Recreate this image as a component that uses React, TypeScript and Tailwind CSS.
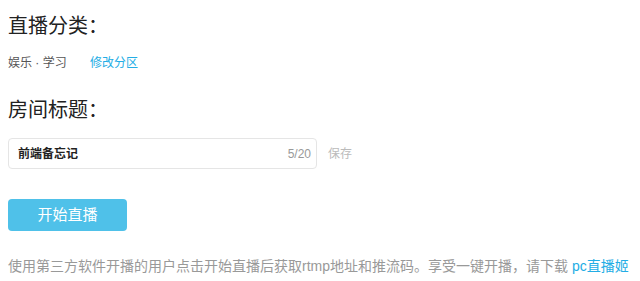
const CJK = "font-['Helvetica_Neue','Liberation_Sans','Noto_Sans_CJK_SC',sans-serif]";

export default function App() {
  return (
    <div className={`h-[281px] w-[640px] overflow-hidden bg-white px-2 pt-[14px] ${CJK}`}>
      <section>
        <h2 className="text-[20px] leading-[24px] text-[#222]">直播分类：</h2>
        <div className="mt-[17px] flex items-center text-[12px] leading-[16px]">
          <span className="w-[82px] text-[#555]">娱乐 · 学习</span>
          <a className="cursor-pointer text-[#23ade5]">修改分区</a>
        </div>
      </section>

      <section className="mt-[27px]">
        <h2 className="text-[20px] leading-[24px] text-[#222]">房间标题：</h2>
        <div className="mt-[16px] flex items-center">
          <div className="flex h-[31px] w-[309px] items-center justify-between rounded-[4px] border border-[#e5e5e5] pl-[9px] pr-[5px]">
            <span className="text-[12px] font-bold text-[#222]">前端备忘记</span>
            <span className="text-[12px] text-[#999]">5/20</span>
          </div>
          <button className="ml-[11px] text-[12px] text-[#bbb]">保存</button>
        </div>
      </section>

      <button className="mt-[30px] flex h-[32px] w-[119px] items-center justify-center rounded-[4px] bg-[#4fc1e9] text-[15px] text-white">
        开始直播
      </button>

      <p className="mt-[26px] whitespace-nowrap text-[14px] leading-[18px] text-[#999]">
        使用第三方软件开播的用户点击开始直播后获取rtmp地址和推流码。享受一键开播，请下载{" "}
        <a className="cursor-pointer text-[#23ade5]">pc直播姬</a>
      </p>
    </div>
  );
}
